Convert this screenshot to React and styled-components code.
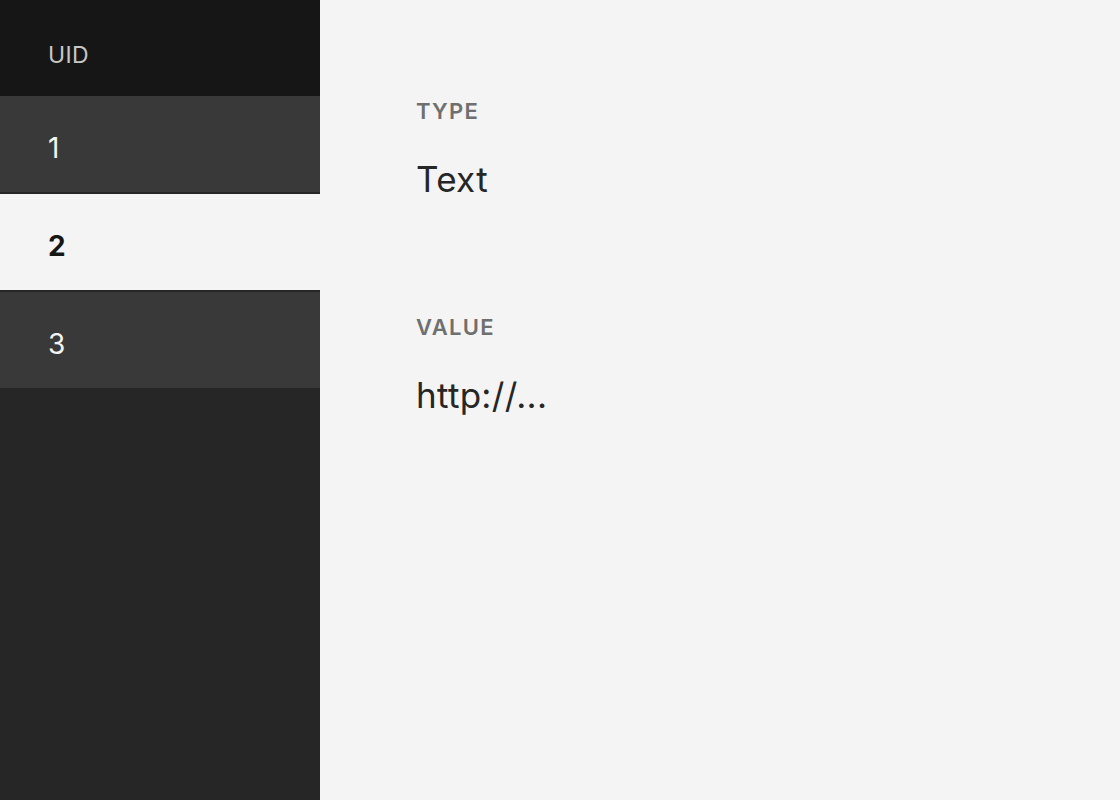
import React from 'react'
import styled, { createGlobalStyle } from 'styled-components'

const GlobalStyle = createGlobalStyle`
    html, body, #root {
        margin: 0;
        height: 100%;
    }
    body {
        font-family: Inter, "Noto Sans", sans-serif;
        background: #f4f4f4;
    }
`

const Layout = styled.div`
    display: flex;
    height: 100vh;
`

const Sidebar = styled.aside`
    width: 320px;
    flex-shrink: 0;
    background: #262626;
    display: flex;
    flex-direction: column;
`

const Header = styled.div`
    height: 96px;
    box-sizing: border-box;
    padding: 14px 48px 0;
    display: flex;
    align-items: center;
    background: #161616;
    color: #c6c6c6;
    font-size: 23px;
    letter-spacing: 0.3px;
`

const Row = styled.div`
    height: 98px;
    box-sizing: border-box;
    padding: 8px 48px 0;
    display: flex;
    align-items: center;
    border-bottom: 2px solid #262626;
    background: ${p => (p.selected ? '#f4f4f4' : '#393939')};
    color: ${p => (p.selected ? '#161616' : '#f4f4f4')};
    font-weight: ${p => (p.selected ? 700 : 400)};
    font-size: 28px;
`

const Main = styled.main`
    flex: 1;
    padding: 98px 96px;
    display: flex;
    flex-direction: column;
    gap: 114px;
`

const Field = styled.div`
    display: flex;
    flex-direction: column;
    gap: 34px;
`

const Label = styled.div`
    color: #6f6f6f;
    font-size: 22px;
    font-weight: 600;
    letter-spacing: 1.3px;
`

const Value = styled.div`
    color: #262626;
    font-size: 35px;
    letter-spacing: 0.3px;
`

const items = [1, 2, 3]

export default function App() {
    const selected = 2
    return (
        <Layout>
            <GlobalStyle />
            <Sidebar>
                <Header>UID</Header>
                {items.map(id => (
                    <Row key={id} selected={id === selected}>{id}</Row>
                ))}
            </Sidebar>
            <Main>
                <Field>
                    <Label>TYPE</Label>
                    <Value>Text</Value>
                </Field>
                <Field>
                    <Label>VALUE</Label>
                    <Value>http://...</Value>
                </Field>
            </Main>
        </Layout>
    )
}
